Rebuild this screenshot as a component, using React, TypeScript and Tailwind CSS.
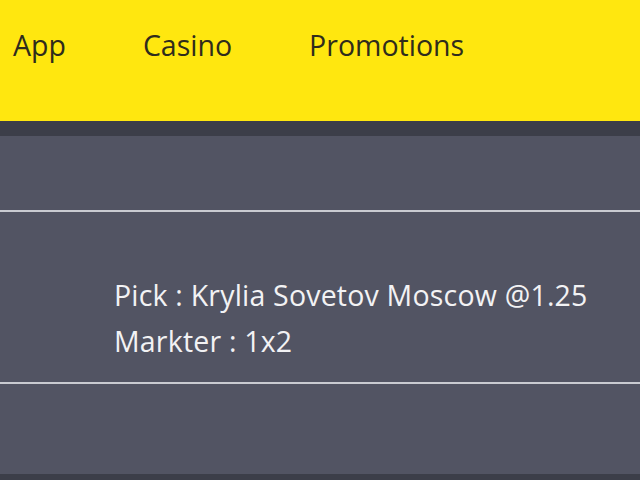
import React from 'react'

const navItems = ['App', 'Casino', 'Promotions']

const App: React.FC = () => {
    return (
        <div className="flex h-[480px] w-[640px] flex-col overflow-hidden bg-[#525463]" style={{ fontFamily: '"Open Sans", "Noto Sans", sans-serif' }}>
            {/* Header */}
            <div className="flex h-[121px] shrink-0 items-center gap-[77px] bg-[#ffe70f] pb-[30px] pl-[13px] text-[28.5px] text-[#2f2c1c]">
                {navItems.map((item) => (
                    <span key={item}>{item}</span>
                ))}
            </div>
            <div className="h-[15px] shrink-0 bg-[#3c3e49]" />

            {/* Body */}
            <div className="h-[74px] shrink-0" />
            <div className="h-[174px] shrink-0 border-y-2 border-[#c9cbd1] pl-[114px] pt-[60px] text-[28.5px] leading-[46px] tracking-[0.2px] text-[#f2f2f4]">
                <p>Pick : Krylia Sovetov Moscow @1.25</p>
                <p>Markter : 1x2</p>
            </div>
            <div className="flex-1" />
            <div className="h-[6px] shrink-0 bg-[#3c3e49]" />
        </div>
    )
}

export default App
